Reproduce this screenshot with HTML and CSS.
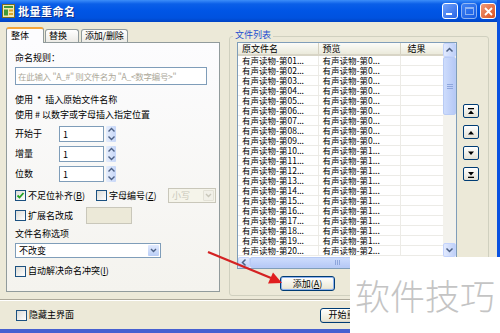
FILE: index.html
```html
<!DOCTYPE html>
<html lang="zh-CN">
<head>
  <meta charset="UTF-8">
  <title>批量重命名</title>
  <link rel="stylesheet" href="styles.css">
</head>
<body>
<div class="window">
  <div class="titlebar">
    <svg class="app-icon" width="13" height="14" viewBox="0 0 13 14">
      <rect x="0.5" y="0.5" width="12" height="13" fill="#f3eab0" stroke="#7c6d24"/>
      <rect x="2" y="2" width="9" height="2" fill="#3f9a3a"/>
      <rect x="2" y="5.5" width="4" height="6" fill="#3f9a3a"/>
      <rect x="7" y="5.5" width="4" height="2" fill="#d9a52b"/>
      <rect x="7" y="9" width="4" height="2" fill="#d9a52b"/>
    </svg>
    <span class="title">批量重命名</span>
    <div class="caption-btns">
      <span class="cap-btn min"><i></i></span>
      <span class="cap-btn max"><i></i></span>
      <span class="cap-btn close">
        <svg width="9" height="9" viewBox="0 0 9 9"><path d="M1 1 L8 8 M8 1 L1 8" stroke="#fff" stroke-width="1.8"/></svg>
      </span>
    </div>
  </div>

  <div class="main">
    <div class="left">
      <div class="tabs">
        <span class="tab active">整体</span>
        <span class="tab">替换</span>
        <span class="tab">添加/删除</span>
      </div>
      <div class="panel">
        <div class="caption">命名规则：</div>
        <input class="rule" type="text" placeholder="在此输入 &quot;A_#&quot; 则文件名为 &quot;A_&lt;数字编号&gt;&quot;">
        <div class="hint first">使用 &nbsp;* &nbsp;插入原始文件名称</div>
        <div class="hint">使用 # 以数字或字母插入指定位置</div>

        <div class="num-row first">
          <span class="num-label">开始于</span>
          <input class="num" type="text" value="1">
          <span class="spin">
            <svg width="9" height="6" viewBox="0 0 9 6"><path d="M1.5 4.5 L4.5 1.5 L7.5 4.5" fill="none" stroke="#4d6185" stroke-width="1.4"/></svg>
            <svg width="9" height="6" viewBox="0 0 9 6"><path d="M1.5 1.5 L4.5 4.5 L7.5 1.5" fill="none" stroke="#4d6185" stroke-width="1.4"/></svg>
          </span>
        </div>
        <div class="num-row">
          <span class="num-label">增量</span>
          <input class="num" type="text" value="1">
          <span class="spin">
            <svg width="9" height="6" viewBox="0 0 9 6"><path d="M1.5 4.5 L4.5 1.5 L7.5 4.5" fill="none" stroke="#4d6185" stroke-width="1.4"/></svg>
            <svg width="9" height="6" viewBox="0 0 9 6"><path d="M1.5 1.5 L4.5 4.5 L7.5 1.5" fill="none" stroke="#4d6185" stroke-width="1.4"/></svg>
          </span>
        </div>
        <div class="num-row">
          <span class="num-label">位数</span>
          <input class="num" type="text" value="1">
          <span class="spin">
            <svg width="9" height="6" viewBox="0 0 9 6"><path d="M1.5 4.5 L4.5 1.5 L7.5 4.5" fill="none" stroke="#4d6185" stroke-width="1.4"/></svg>
            <svg width="9" height="6" viewBox="0 0 9 6"><path d="M1.5 1.5 L4.5 4.5 L7.5 1.5" fill="none" stroke="#4d6185" stroke-width="1.4"/></svg>
          </span>
        </div>

        <div class="opt-row">
          <label class="opt"><span class="check on">
            <svg width="9" height="9" viewBox="0 0 9 9"><path d="M1.5 4.5 L3.5 6.5 L7.5 2" fill="none" stroke="#21a121" stroke-width="1.8"/></svg>
          </span>不足位补齐(<u>B</u>)</label>
          <label class="opt"><span class="check"></span>字母编号(<u>Z</u>)</label>
          <span class="combo small disabled">小写<span class="drop">
            <svg width="7" height="5" viewBox="0 0 7 5"><path d="M1 1 L3.5 3.5 L6 1" fill="none" stroke="#c9c7ba" stroke-width="1.4"/></svg>
          </span></span>
        </div>

        <div class="ext-row">
          <label class="opt"><span class="check"></span>扩展名改成</label>
          <span class="ext-box"></span>
        </div>

        <div class="caption name-opt">文件名称选项</div>
        <span class="combo wide">不改变<span class="drop">
          <svg width="7" height="5" viewBox="0 0 7 5"><path d="M1 1 L3.5 3.5 L6 1" fill="none" stroke="#4d6185" stroke-width="1.4"/></svg>
        </span></span>

        <label class="opt auto"><span class="check"></span>自动解决命名冲突(<u>I</u>)</label>
      </div>
    </div>

    <div class="group">
      <span class="group-label">文件列表</span>
      <div class="group-body">
        <div class="list-col">
          <div class="listview">
            <div class="list-main">
              <table class="files">
                <colgroup><col class="c1"><col class="c2"><col class="c3"></colgroup>
                <thead><tr><th>原文件名</th><th>预览</th><th>结果</th></tr></thead>
                <tbody>
                  <tr><td>有声读物-第01...</td><td>有声读物-第0...</td><td></td></tr>
                  <tr><td>有声读物-第02...</td><td>有声读物-第0...</td><td></td></tr>
                  <tr><td>有声读物-第03...</td><td>有声读物-第0...</td><td></td></tr>
                  <tr><td>有声读物-第04...</td><td>有声读物-第0...</td><td></td></tr>
                  <tr><td>有声读物-第05...</td><td>有声读物-第0...</td><td></td></tr>
                  <tr><td>有声读物-第06...</td><td>有声读物-第0...</td><td></td></tr>
                  <tr><td>有声读物-第07...</td><td>有声读物-第0...</td><td></td></tr>
                  <tr><td>有声读物-第08...</td><td>有声读物-第0...</td><td></td></tr>
                  <tr><td>有声读物-第09...</td><td>有声读物-第0...</td><td></td></tr>
                  <tr><td>有声读物-第10...</td><td>有声读物-第1...</td><td></td></tr>
                  <tr><td>有声读物-第11...</td><td>有声读物-第1...</td><td></td></tr>
                  <tr><td>有声读物-第12...</td><td>有声读物-第1...</td><td></td></tr>
                  <tr><td>有声读物-第13...</td><td>有声读物-第1...</td><td></td></tr>
                  <tr><td>有声读物-第14...</td><td>有声读物-第1...</td><td></td></tr>
                  <tr><td>有声读物-第15...</td><td>有声读物-第1...</td><td></td></tr>
                  <tr><td>有声读物-第16...</td><td>有声读物-第1...</td><td></td></tr>
                  <tr><td>有声读物-第17...</td><td>有声读物-第1...</td><td></td></tr>
                  <tr><td>有声读物-第18...</td><td>有声读物-第1...</td><td></td></tr>
                  <tr><td>有声读物-第19...</td><td>有声读物-第1...</td><td></td></tr>
                  <tr><td>有声读物-第20...</td><td>有声读物-第2...</td><td></td></tr>
                </tbody>
              </table>
            </div>
            <div class="vscroll">
              <span class="sb-btn">
                <svg width="9" height="6" viewBox="0 0 9 6"><path d="M1.5 4.5 L4.5 1.5 L7.5 4.5" fill="none" stroke="#4d6185" stroke-width="1.5"/></svg>
              </span>
              <span class="sb-thumb v"><i></i><i></i><i></i></span>
              <span class="sb-track"></span>
              <span class="sb-btn">
                <svg width="9" height="6" viewBox="0 0 9 6"><path d="M1.5 1.5 L4.5 4.5 L7.5 1.5" fill="none" stroke="#4d6185" stroke-width="1.5"/></svg>
              </span>
            </div>
            <div class="hscroll">
              <span class="sb-btn">
                <svg width="6" height="9" viewBox="0 0 6 9"><path d="M4.5 1.5 L1.5 4.5 L4.5 7.5" fill="none" stroke="#4d6185" stroke-width="1.5"/></svg>
              </span>
              <span class="sb-thumb h"><i></i><i></i><i></i></span>
              <span class="sb-track"></span>
            </div>
            <div class="corner"></div>
          </div>
          <button class="btn add">添加(<u>A</u>)</button>
        </div>

        <div class="move-btns">
          <span class="move">
            <svg width="8" height="7" viewBox="0 0 8 7"><rect x="1" y="0" width="6" height="1.3" fill="#000"/><path d="M1 6 L4 2.5 L7 6 Z" fill="#000"/></svg>
          </span>
          <span class="move">
            <svg width="8" height="7" viewBox="0 0 8 7"><path d="M1 5.5 L4 2 L7 5.5 Z" fill="#000"/></svg>
          </span>
          <span class="move">
            <svg width="8" height="7" viewBox="0 0 8 7"><path d="M1 1.5 L4 5 L7 1.5 Z" fill="#000"/></svg>
          </span>
          <span class="move">
            <svg width="8" height="7" viewBox="0 0 8 7"><path d="M1 1 L4 4.5 L7 1 Z" fill="#000"/><rect x="1" y="5.7" width="6" height="1.3" fill="#000"/></svg>
          </span>
        </div>
      </div>
    </div>
  </div>

  <div class="separator"></div>

  <div class="footer">
    <label class="opt"><span class="check"></span>隐藏主界面</label>
    <button class="btn start">开始重命名</button>
  </div>
</div>

<svg class="arrow" width="500" height="333" viewBox="0 0 500 333">
  <line x1="208" y1="252" x2="271" y2="278" stroke="#d42222" stroke-width="2.4"/>
  <path d="M282 283 L268 283.5 L273 272.5 Z" fill="#e01e1e"/>
</svg>

<div class="watermark">软件技巧</div>
</body>
</html>
```

FILE: styles.css
```css
* {
  box-sizing: border-box;
}
body {
  margin: 0;
  width: 500px;
  height: 333px;
  overflow: hidden;
  position: relative;
  font-family: "Noto Sans CJK SC", "Liberation Sans", sans-serif;
  font-size: 9px;
  line-height: 12px;
  color: #000;
  background: #ece9d8;
}
u {
  text-decoration: underline;
}

.window {
  width: 500px;
  height: 333px;
  display: flex;
  flex-direction: column;
  background: #ece9d8;
  border-right: 3px solid #0a52e0;
  border-bottom: 4px solid #4660d0;
}

/* title bar */
.titlebar {
  height: 22px;
  flex: none;
  display: flex;
  align-items: center;
  padding: 0 1px 0 2px;
  color: #fff;
  background: linear-gradient(#3d8ef9 0, #0b5fe8 18%, #0055e5 50%, #0052df 82%, #0043c4 100%);
}
.app-icon {
  margin-right: 3px;
}
.title {
  flex: 1;
  font-size: 11px;
  font-weight: bold;
  letter-spacing: 0.5px;
  text-shadow: 1px 1px 0 #0a2d8a;
}
.caption-btns {
  display: flex;
  gap: 3px;
}
.cap-btn {
  width: 16px;
  height: 16px;
  border: 1px solid #fff;
  border-radius: 3px;
  display: flex;
  align-items: center;
  justify-content: center;
  position: relative;
  background: linear-gradient(135deg, #6fa1fb, #2a66e6);
}
.cap-btn.min i {
  position: absolute;
  left: 3px;
  bottom: 3px;
  width: 6px;
  height: 2px;
  background: #fff;
}
.cap-btn.max {
  opacity: 0.55;
}
.cap-btn.max i {
  width: 9px;
  height: 8px;
  border: 1px solid #fff;
  border-top-width: 2px;
}
.cap-btn.close {
  background: linear-gradient(135deg, #f09a78, #d9501f);
}

/* main area */
.main {
  height: 276px;
  flex: none;
  display: flex;
  padding: 5px 8px 0 6px;
  gap: 9px;
}
.left {
  width: 214px;
}
.tabs {
  height: 15px;
  display: flex;
  align-items: flex-end;
  gap: 1px;
}
.tab {
  height: 13px;
  line-height: 12px;
  padding: 0 3px;
  white-space: nowrap;
  border: 1px solid #919b9c;
  border-bottom: none;
  border-radius: 3px 3px 0 0;
  background: linear-gradient(#fff, #ecebe6);
}
.tab.active {
  width: 38px;
  height: 16px;
  margin-bottom: -1px;
  padding: 1px 0 0 4px;
  position: relative;
  z-index: 1;
  border-top: 2px solid #f5a53a;
  background: #fcfcfe;
}
.tab:nth-child(2) {
  width: 34px;
}
.tab:nth-child(3) {
  margin-left: 1px;
  letter-spacing: -0.2px;
}
.panel {
  height: 250px;
  border: 1px solid #919b9c;
  padding: 0 3px 0 8px;
  background: linear-gradient(#fcfcfe, #f4f3ee);
}
.caption {
  margin-top: 9px;
  line-height: 12px;
}
.rule {
  display: block;
  margin-top: 3px;
  width: 192px;
  height: 18px;
  padding: 0 2px;
  border: 1px solid #7f9db9;
  font: inherit;
  background: #fff;
}
.rule::placeholder {
  color: #aca899;
  font-size: 8.5px;
  letter-spacing: -0.3px;
}
.hint {
  line-height: 15px;
}
.hint.first {
  margin-top: 7px;
}
.num-row {
  display: flex;
  align-items: center;
  height: 16px;
  margin-top: 4px;
}
.num-label {
  width: 44px;
}
.num {
  width: 45px;
  height: 16px;
  padding: 0 3px;
  border: 1px solid #7f9db9;
  font: inherit;
  background: #fff;
}
.spin {
  margin-left: 2px;
  width: 10px;
  height: 16px;
  display: flex;
  flex-direction: column;
  align-items: center;
  justify-content: space-around;
  background: linear-gradient(90deg, #e6eefc, #c6d6f8);
  border-radius: 1px;
}

.opt {
  display: flex;
  align-items: center;
  white-space: nowrap;
}
.check {
  width: 11px;
  height: 11px;
  margin-right: 2px;
  flex: none;
  display: flex;
  align-items: center;
  justify-content: center;
  border: 1px solid #1c5180;
  background: linear-gradient(135deg, #dcdcd7, #fff);
}
.opt-row {
  margin-top: 6px;
  height: 15px;
  display: grid;
  grid-template-columns: 81px 72px 48px;
  align-items: center;
}
.combo {
  position: relative;
  display: flex;
  align-items: center;
  height: 15px;
  padding-left: 3px;
  border: 1px solid #7f9db9;
  background: #fff;
}
.combo .drop {
  position: absolute;
  right: 1px;
  top: 1px;
  bottom: 1px;
  width: 11px;
  display: flex;
  align-items: center;
  justify-content: center;
  border-radius: 1px;
  background: linear-gradient(#e1eafe, #b9cdf6);
}
.combo.disabled {
  color: #c9c7ba;
  border-color: #c9c7ba;
  background: #f5f4ea;
}
.combo.disabled .drop {
  background: #f1f0e8;
  border: 1px solid #e3e1d6;
}
.ext-row {
  margin-top: 4px;
  height: 17px;
  display: grid;
  grid-template-columns: 71px 46px;
  align-items: center;
}
.ext-box {
  height: 17px;
  border: 1px solid #c9c7ba;
  background: #ece9d8;
}
.name-opt {
  margin-top: 4px;
}
.combo.wide {
  margin-top: 3px;
  width: 146px;
}
.opt.auto {
  margin-top: 7px;
  height: 12px;
}

/* file list group */
.group {
  position: relative;
  margin-top: 9px;
  width: 260px;
  height: 260px;
  border: 1px solid #d0d0bf;
  border-radius: 3px;
  padding: 5px 0 0 7px;
}
.group-label {
  position: absolute;
  top: -8px;
  left: 3px;
  padding: 0 2px;
  background: #ece9d8;
  color: #1f4fd0;
}
.group-body {
  display: flex;
  gap: 6px;
}
.listview {
  width: 220px;
  height: 227px;
  display: grid;
  grid-template-columns: 1fr 13px;
  grid-template-rows: 1fr 11px;
  border: 1px solid #7f9db9;
  background: #fff;
}
.list-main {
  overflow: hidden;
}
.files {
  width: 205px;
  border-collapse: collapse;
  table-layout: fixed;
}
.files col.c1 {
  width: 80px;
}
.files col.c2 {
  width: 82px;
}
.files col.c3 {
  width: 43px;
}
.files th {
  height: 12px;
  padding: 0 4px;
  font-weight: normal;
  text-align: left;
  line-height: 11px;
  background: linear-gradient(#fbfbf9, #ebeadb);
  border-right: 1px solid #d6d2c2;
  border-bottom: 2px solid #d8d5c6;
}
.files th:last-child {
  padding-left: 7px;
}
.files td {
  height: 10px;
  font-size: 8.5px;
  line-height: 9px;
  padding: 0 4px;
  white-space: nowrap;
  overflow: hidden;
  border-right: 1px solid #ecebe6;
  border-bottom: 1px solid #ecebe6;
}
.vscroll {
  display: flex;
  flex-direction: column;
  background: #f3f2ec;
}
.hscroll {
  display: flex;
  background: #f3f2ec;
}
.sb-btn {
  flex: none;
  width: 13px;
  height: 14px;
  display: flex;
  align-items: center;
  justify-content: center;
  border: 1px solid #c3d3fd;
  border-radius: 2px;
  background: linear-gradient(90deg, #e2eafe, #bfd0f8);
}
.hscroll .sb-btn {
  width: 12px;
  height: 11px;
  background: linear-gradient(#e2eafe, #bfd0f8);
}
.sb-thumb {
  flex: none;
  display: flex;
  align-items: center;
  justify-content: center;
  gap: 1px;
  border: 1px solid #b8cbf5;
  border-radius: 2px;
  background: linear-gradient(90deg, #cddcfc, #b6c9f6);
}
.sb-thumb.v {
  height: 58px;
  flex-direction: column;
}
.sb-thumb.v i {
  width: 6px;
  height: 1px;
  background: #8ea6dc;
}
.sb-thumb.h {
  width: 175px;
  background: linear-gradient(#cddcfc, #b6c9f6);
}
.sb-thumb.h i {
  width: 1px;
  height: 5px;
  background: #8ea6dc;
}
.sb-track {
  flex: 1;
}
.corner {
  background: #ece9d8;
}

.move-btns {
  margin-top: 62px;
  display: flex;
  flex-direction: column;
  gap: 7px;
}
.move {
  width: 16px;
  height: 14px;
  display: flex;
  align-items: center;
  justify-content: center;
  border: 1px solid #003c74;
  border-radius: 2px;
  background: linear-gradient(#fff, #e3e1d6);
}

.btn {
  height: 15px;
  padding: 0;
  font: inherit;
  color: #000;
  border: 1px solid #003c74;
  border-radius: 3px;
  background: linear-gradient(#fff, #ece9d8 85%, #d6d0c5);
}
.btn.add {
  display: block;
  margin: 7px 0 0 43px;
  width: 55px;
  box-shadow: inset 0 0 0 1px #8fb2ef;
}

/* footer */
.separator {
  height: 2px;
  margin-top: 1px;
  border-top: 1px solid #aca899;
  border-bottom: 1px solid #fff;
}
.footer {
  flex: 1;
  display: flex;
  align-items: center;
  padding-left: 16px;
}
.btn.start {
  margin-left: auto;
  margin-right: 115px;
  width: 62px;
  white-space: nowrap;
}

/* annotations over the screenshot */
.arrow {
  position: absolute;
  left: 0;
  top: 0;
  pointer-events: none;
}
.watermark {
  position: absolute;
  left: 350px;
  top: 257px;
  width: 150px;
  height: 76px;
  padding-left: 5px;
  background: #fff;
  color: #c4c4c4;
  font-size: 35px;
  font-weight: 300;
  line-height: 76px;
  white-space: nowrap;
}
```
